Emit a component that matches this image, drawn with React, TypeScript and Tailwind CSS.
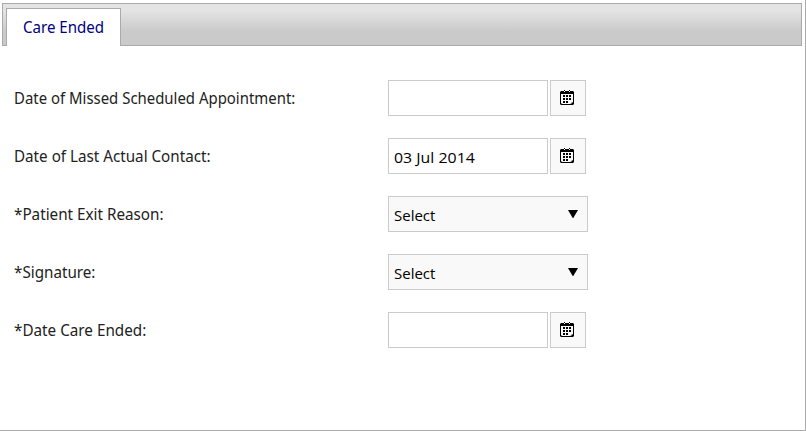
import React from "react";

function CalendarIcon() {
  return (
    <svg width="14" height="15" viewBox="0 0 14 15" shapeRendering="crispEdges" aria-hidden="true">
      <path d="M1 1h3V0h1v1h4V0h1v1h3v1h1v12h-1v1H1v-1H0V2h1z" fill="#000" />
      <path d="M1 4h12v9h-1v1H1z" fill="#f9f9f9" />
      <path d="M4 1h1v1H4zM9 1h1v1H9z" fill="#f9f9f9" />
      <path d="M3 5h2v2H3zM6 5h2v2H6zM9 5h2v2H9zM3 8h2v2H3zM6 8h2v2H6zM9 8h2v2H9zM3 11h2v2H3zM6 11h2v2H6z" fill="#000" />
      <path d="M0 1h1v1H0zM13 1h1v1h-1zM0 14h1v1H0zM13 14h1v1h-1zM1 13h1v1H1z" fill="#777" />
      <path d="M11 12h1v1h-1zM10 13h1v1h-1z" fill="#ccc" />
      <path d="M12 12h1v1h-1zM11 13h1v1h-1z" fill="#555" />
    </svg>
  );
}

function DateField({ value = "" }: { value?: string }) {
  return (
    <div className="flex gap-0.5">
      <div className="flex h-9 w-40 items-center border border-[#cbcbcb] bg-white pl-[5px] pt-0.5">
        <span className="origin-left scale-x-[1.06] font-['Open_Sans',sans-serif] whitespace-nowrap">{value}</span>
      </div>
      <button aria-label="Choose date" className="flex h-9 w-9 items-start border border-[#cbcbcb] bg-[#f9f9f9] pl-[9px] pt-[9px]">
        <CalendarIcon />
      </button>
    </div>
  );
}

function SelectField() {
  return (
    <button className="flex h-9 w-[200px] items-center justify-between border border-[#cbcbcb] bg-[#f9f9f9] pl-[5px] pr-[9px] pt-0.5">
      <span className="origin-left font-['Open_Sans',sans-serif]">Select</span>
      <svg width="10" height="8" viewBox="0 0 10 8" className="mb-[3px]" aria-hidden="true">
        <path d="M0 0h10L5 8.5z" fill="#000" />
      </svg>
    </button>
  );
}

function Row({ label, width, children }: { label: string; width: string; children: React.ReactNode }) {
  return (
    <div className="flex h-9 items-center">
      <label className="w-[374px] shrink-0 text-base text-[#222]">
        <span className={`inline-block origin-left whitespace-nowrap ${width}`}>{label}</span>
      </label>
      {children}
    </div>
  );
}

export default function App() {
  return (
    <main className="flex h-[431px] w-[806px] flex-col overflow-hidden border-b border-r border-[#aaa] bg-white font-['Noto_Sans',sans-serif] text-[15px] leading-6 text-black">
      <header className="ml-0.5 mt-[3px] flex h-[43px] w-[800px] border border-b-0 border-[#aaa] bg-linear-to-b from-[#e4e4e4] from-15% via-[#cacaca] via-65% to-[#cacaca]">
        <div className="w-[3px] border-b border-[#aaa]" />
        <div className="mt-1 flex w-[115px] items-center border border-b-0 border-[#aaa] bg-white pb-0.5 pl-4 text-base text-[#000080]">
          <span className="origin-left scale-x-[0.943] whitespace-nowrap">Care Ended</span>
        </div>
        <div className="flex-1 border-b border-[#aaa]" />
      </header>
      <section className="mt-[34px] flex flex-col gap-[22px] pl-3.5">
        <Row label="Date of Missed Scheduled Appointment:" width="scale-x-[0.933]"><DateField /></Row>
        <Row label="Date of Last Actual Contact:" width="scale-x-[0.95]"><DateField value="03 Jul 2014" /></Row>
        <Row label="*Patient Exit Reason:" width="scale-x-[0.952]"><SelectField /></Row>
        <Row label="*Signature:" width="scale-x-[0.95]"><SelectField /></Row>
        <Row label="*Date Care Ended:" width="scale-x-[0.953]"><DateField /></Row>
      </section>
    </main>
  );
}
